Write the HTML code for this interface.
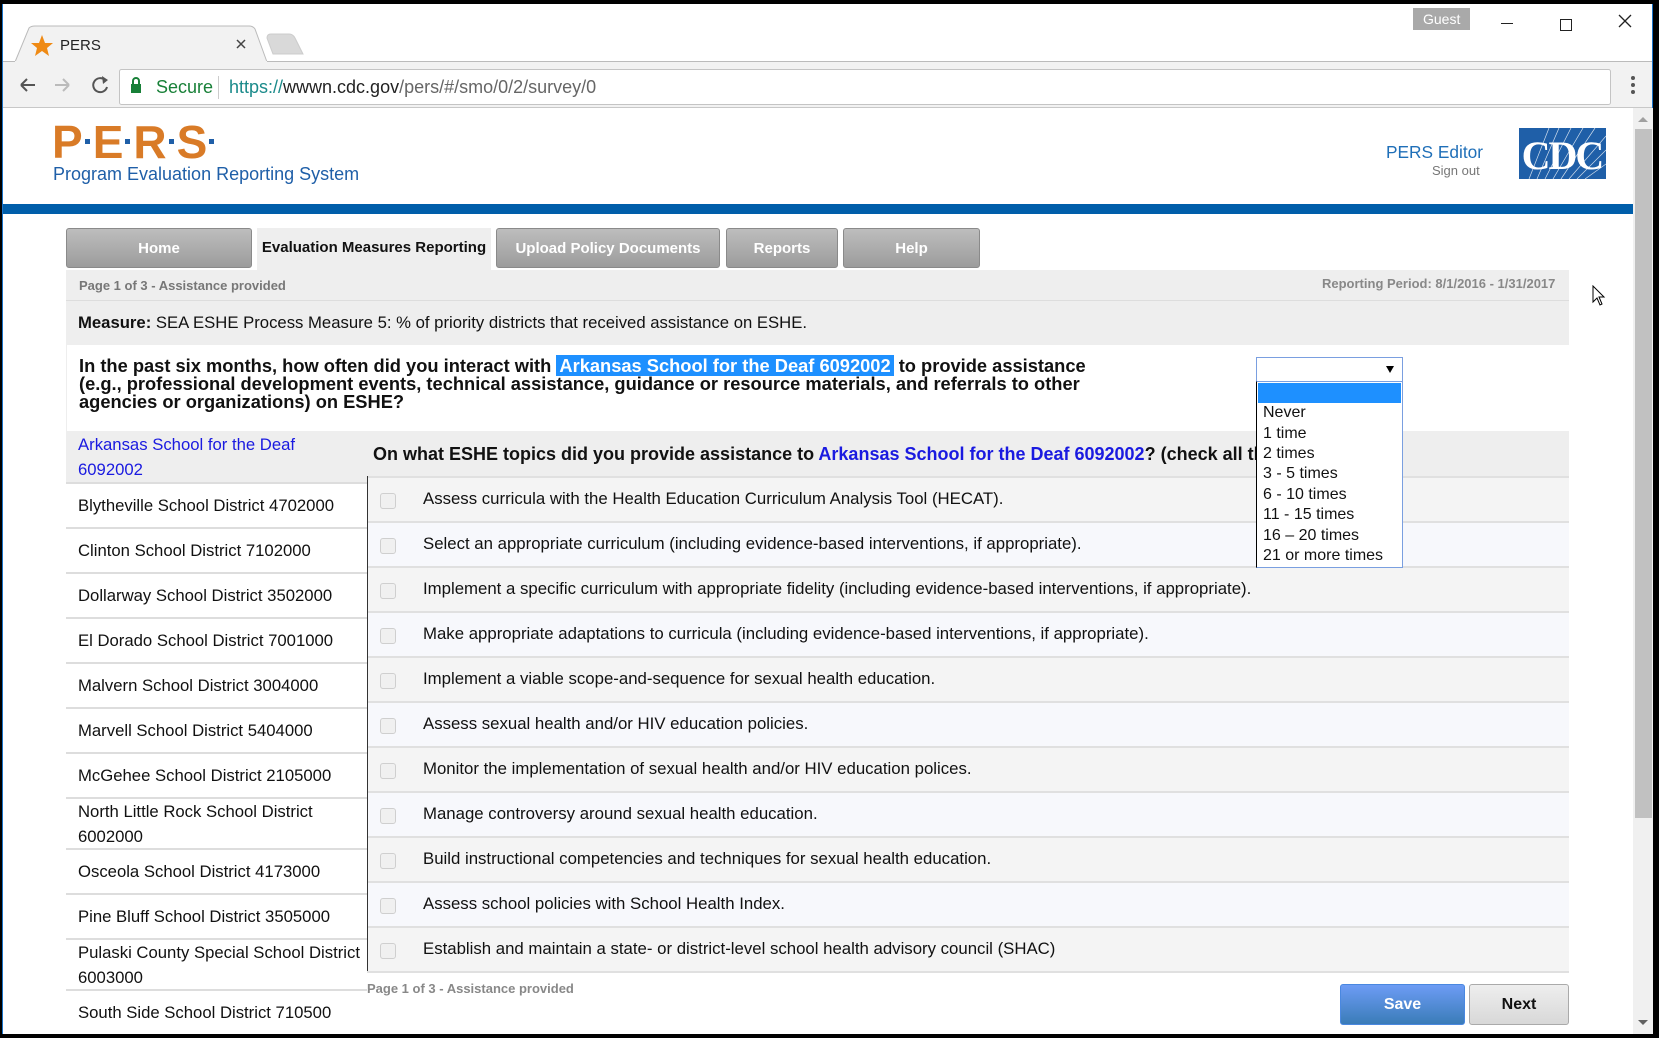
<!DOCTYPE html>
<html><head><meta charset="utf-8"><style>
*{margin:0;padding:0;box-sizing:border-box}
body{width:1659px;height:1038px;overflow:hidden;background:#000;font-family:"Liberation Sans",Arial,sans-serif;position:relative}
.a{position:absolute}
.win{left:2px;top:4px;width:1651px;height:1030px;background:#fff;border-left:1px solid #1a73c8;border-right:1px solid #1a73c8;overflow:hidden}
.tab{color:#fff;font-weight:bold;font-size:15px;text-align:center;line-height:40px;border:1px solid #8a8a8a;border-radius:3px;background:linear-gradient(#bdbdbd,#9c9c9c);top:228px;height:40px}
.lrow{left:66px;width:301px;border-top:2px solid #ddd;font-size:16.7px;color:#111;padding-left:12px;line-height:25px;display:flex;align-items:center}
.rrow{left:367px;width:1202px;height:45px;border-top:2px solid #e0e0e0;font-size:16.8px;color:#111;line-height:41px;padding-left:56px}
.rrow:before{content:"";position:absolute;left:13px;top:15px;width:14px;height:14px;border:1px solid #cfcfcf;border-radius:3px;background:#f0f0f0}
.opt{left:1263px;font-size:16px;color:#111}
.dot{display:inline-block;width:5px;height:5px;background:#1f5fa8;margin:0 3px;vertical-align:middle;position:relative;top:-4px}
</style></head><body>
<div class="a win">
 <svg class="a" style="left:0;top:0" width="1651" height="104">
  <path d="M12 58 L26 24 Q28 22 32 22 L246 22 Q250 22 252 25 L264 58" fill="#f2f2f2" stroke="#bbb"/>
  <path d="M264 34 Q264 30 268 30 L286 30 Q290 30 292 34 L300 50 L270 50 Z" fill="#d9d9d9" stroke="#ccc"/>
  <rect x="0" y="57" width="1651" height="47" fill="#f2f2f2"/>
  <line x1="0" y1="57.5" x2="12" y2="57.5" stroke="#bbb"/><line x1="264" y1="57.5" x2="1651" y2="57.5" stroke="#bbb"/>
  <line x1="0" y1="103.5" x2="1651" y2="103.5" stroke="#c8c8c8"/>
  <polygon points="39,31 42,39 50,39 44,44 46,52 39,47 32,52 34,44 28,39 36,39" fill="#ef8a14"/>
  <text x="57" y="46" font-size="15" font-family="Liberation Sans" fill="#222">PERS</text>
  <path d="M234 36 L242 44 M242 36 L234 44" stroke="#444" stroke-width="1.5"/>
  <rect x="1410" y="4" width="57" height="22" fill="#a9a9a9"/>
  <text x="1420" y="20" font-size="14" font-family="Liberation Sans" fill="#fff">Guest</text>
  <line x1="1498" y1="19.5" x2="1510" y2="19.5" stroke="#222"/>
  <rect x="1557.5" y="15.5" width="11" height="11" fill="none" stroke="#222"/>
  <path d="M1616 11 L1628 23 M1628 11 L1616 23" stroke="#222" stroke-width="1.3"/>
  <path d="M18 81 H32 M18 81 L24 75 M18 81 L24 87" stroke="#555" stroke-width="2" fill="none"/>
  <path d="M52 81 H66 M66 81 L60 75 M66 81 L60 87" stroke="#bbb" stroke-width="2" fill="none"/>
  <path d="M102 76 A7 7 0 1 0 104 83" stroke="#555" stroke-width="2" fill="none"/><path d="M99 72 L105 76 L100 80Z" fill="#555"/>
  <rect x="116.5" y="65.5" width="1491" height="35" rx="2" fill="#fff" stroke="#c4c4c4"/>
  <rect x="128" y="80" width="10" height="9" fill="#188038"/><path d="M130 80 V77 A3 3 0 0 1 136 77 V80" stroke="#188038" stroke-width="2" fill="none"/>
  <text x="153" y="89" font-size="18" font-family="Liberation Sans" fill="#188038">Secure</text>
  <line x1="215.5" y1="72" x2="215.5" y2="95" stroke="#ccc"/>
  <text x="226" y="89" font-size="18" font-family="Liberation Sans" fill="#1a8a8a">https://<tspan fill="#222">wwwn.cdc.gov</tspan><tspan fill="#666">/pers/#/smo/0/2/survey/0</tspan></text>
  <circle cx="1630" cy="74" r="2" fill="#555"/><circle cx="1630" cy="81" r="2" fill="#555"/><circle cx="1630" cy="88" r="2" fill="#555"/>
 </svg>
</div>
<div class="a" style="left:52px;top:119px;font-size:46px;line-height:46px;font-weight:bold;color:#d97b27;letter-spacing:-1px">P<span class="dot"></span>E<span class="dot"></span>R<span class="dot"></span>S<span class="dot"></span></div>
<div class="a" style="left:53px;top:164px;font-size:18px;color:#1f5fa8">Program Evaluation Reporting System</div>
<div class="a" style="left:1386px;top:142px;font-size:17.3px;color:#1f6fb8">PERS Editor</div>
<div class="a" style="left:1432px;top:163px;font-size:13px;color:#777">Sign out</div>
<svg class="a" style="left:1519px;top:128px" width="87" height="51">
 <rect width="87" height="51" fill="#1f5fa8"/>
 <g stroke="#fff" stroke-width="0.7" opacity="0.8"><path d="M10 51 L30 0 M18 51 L40 0 M26 51 L52 0 M34 51 L64 0 M42 51 L76 0 M50 51 L87 8 M58 51 L87 22 M66 51 L87 36"/></g>
 <text x="43" y="41" text-anchor="middle" font-family="Liberation Serif" font-weight="bold" font-size="40" fill="#fff" letter-spacing="-2">CDC</text>
</svg>
<div class="a" style="left:3px;top:204px;width:1630px;height:10px;background:#005eaa"></div>
<div class="a" style="left:1633px;top:108px;width:20px;height:926px;background:#f0f0f0"></div>
<div class="a" style="left:1635px;top:129px;width:17px;height:689px;background:#c1c1c1"></div>
<div class="a" style="left:1638px;top:117px;width:0;height:0;border-left:5px solid transparent;border-right:5px solid transparent;border-bottom:5px solid #a0a0a0"></div>
<div class="a" style="left:1638px;top:1020px;width:0;height:0;border-left:5px solid transparent;border-right:5px solid transparent;border-top:5px solid #606060"></div>
<div class="a tab" style="left:66px;width:186px">Home</div>
<div class="a" style="left:257px;top:228px;width:234px;height:42px;background:#eee;font-weight:bold;font-size:15px;line-height:40px;text-align:center;color:#111">Evaluation Measures Reporting</div>
<div class="a tab" style="left:496px;width:224px">Upload Policy Documents</div>
<div class="a tab" style="left:726px;width:112px">Reports</div>
<div class="a tab" style="left:843px;width:137px">Help</div>
<div class="a" style="left:66px;top:270px;width:1503px;height:162px;background:#eee"></div>
<div class="a" style="left:79px;top:278px;font-size:13px;font-weight:bold;color:#777">Page 1 of 3 - Assistance provided</div>
<div class="a" style="left:1322px;top:276px;font-size:13px;font-weight:bold;color:#888">Reporting Period: 8/1/2016 - 1/31/2017</div>
<div class="a" style="left:66px;top:300px;width:1503px;border-top:1px solid #ddd"></div>
<div class="a" style="left:78px;top:313px;font-size:16.7px;color:#111"><b>Measure:</b> SEA ESHE Process Measure 5: % of priority districts that received assistance on ESHE.</div>
<div class="a" style="left:67px;top:345px;width:1502px;height:86px;background:#fff"></div>
<div class="a" style="left:79px;top:357px;width:1010px;font-size:18.3px;font-weight:bold;color:#111;line-height:18px">In the past six months, how often did you interact with <span style="background:#1e90ff;color:#fff;padding:0 3px">Arkansas School for the Deaf 6092002</span> to provide assistance (e.g., professional development events, technical assistance, guidance or resource materials, and referrals to other agencies or organizations) on ESHE?</div>
<div class="a" style="left:66px;top:432px;width:301px;height:50px;background:#eee;color:#1a1ae0;font-size:16.7px;padding-left:12px;line-height:25px">Arkansas School for the Deaf<br>6092002</div>
<div class="a" style="left:367px;top:432px;width:1202px;height:44px;background:#eee;font-size:18px;font-weight:bold;color:#111;line-height:44px;padding-left:6px;white-space:nowrap;overflow:hidden">On what ESHE topics did you provide assistance to <span style="color:#1a1ae0">Arkansas School for the Deaf 6092002</span>? (check all that apply)</div>
<div class="a lrow" style="top:482px;height:45px">Blytheville School District 4702000</div>
<div class="a lrow" style="top:527px;height:45px">Clinton School District 7102000</div>
<div class="a lrow" style="top:572px;height:45px">Dollarway School District 3502000</div>
<div class="a lrow" style="top:617px;height:45px">El Dorado School District 7001000</div>
<div class="a lrow" style="top:662px;height:45px">Malvern School District 3004000</div>
<div class="a lrow" style="top:707px;height:45px">Marvell School District 5404000</div>
<div class="a lrow" style="top:752px;height:45px">McGehee School District 2105000</div>
<div class="a lrow" style="top:797px;height:51px">North Little Rock School District 6002000</div>
<div class="a lrow" style="top:848px;height:45px">Osceola School District 4173000</div>
<div class="a lrow" style="top:893px;height:45px">Pine Bluff School District 3505000</div>
<div class="a lrow" style="top:938px;height:51px">Pulaski County Special School District 6003000</div>
<div class="a lrow" style="top:989px;height:45px">South Side School District 710500</div>
<div class="a rrow" style="top:476px;background:#f4f4f4">Assess curricula with the Health Education Curriculum Analysis Tool (HECAT).</div>
<div class="a rrow" style="top:521px;background:#f7f8fc">Select an appropriate curriculum (including evidence-based interventions, if appropriate).</div>
<div class="a rrow" style="top:566px;background:#f4f4f4">Implement a specific curriculum with appropriate fidelity (including evidence-based interventions, if appropriate).</div>
<div class="a rrow" style="top:611px;background:#f7f8fc">Make appropriate adaptations to curricula (including evidence-based interventions, if appropriate).</div>
<div class="a rrow" style="top:656px;background:#f4f4f4">Implement a viable scope-and-sequence for sexual health education.</div>
<div class="a rrow" style="top:701px;background:#f7f8fc">Assess sexual health and/or HIV education policies.</div>
<div class="a rrow" style="top:746px;background:#f4f4f4">Monitor the implementation of sexual health and/or HIV education polices.</div>
<div class="a rrow" style="top:791px;background:#f7f8fc">Manage controversy around sexual health education.</div>
<div class="a rrow" style="top:836px;background:#f4f4f4">Build instructional competencies and techniques for sexual health education.</div>
<div class="a rrow" style="top:881px;background:#f7f8fc">Assess school policies with School Health Index.</div>
<div class="a rrow" style="top:926px;background:#f4f4f4;border-bottom:2px solid #e0e0e0;height:47px">Establish and maintain a state- or district-level school health advisory council (SHAC)</div>
<div class="a" style="left:367px;top:476px;width:1px;height:495px;background:#333"></div>
<div class="a" style="left:367px;top:981px;font-size:13px;font-weight:bold;color:#888">Page 1 of 3 - Assistance provided</div>
<div class="a" style="left:1340px;top:984px;width:125px;height:41px;border-radius:3px;border:1px solid #4a88e0;background:linear-gradient(#6d9cf5,#3a7cb8);color:#fff;font-weight:bold;font-size:16px;text-align:center;line-height:39px">Save</div>
<div class="a" style="left:1469px;top:984px;width:100px;height:41px;border-radius:3px;border:1px solid #aaa;background:linear-gradient(#eee,#d8d8d8);color:#111;font-weight:bold;font-size:16px;text-align:center;line-height:39px">Next</div>
<div class="a" style="left:1256px;top:357px;width:147px;height:25px;background:#fff;border:1px solid #7a9fe0;border-bottom:1px solid #000"></div>
<div class="a" style="left:1386px;top:366px;width:0;height:0;border-left:4px solid transparent;border-right:4px solid transparent;border-top:7px solid #000"></div>
<div class="a" style="left:1256px;top:381px;width:147px;height:187px;background:#fff;border:1px solid #7a9fe0;border-left:1px solid #000"></div>
<div class="a" style="left:1258px;top:383px;width:143px;height:20px;background:#1e90ff"></div>
<div class="a opt" style="top:404px">Never</div>
<div class="a opt" style="top:425px">1 time</div>
<div class="a opt" style="top:445px">2 times</div>
<div class="a opt" style="top:465px">3 - 5 times</div>
<div class="a opt" style="top:486px">6 - 10 times</div>
<div class="a opt" style="top:506px">11 - 15 times</div>
<div class="a opt" style="top:527px">16 – 20 times</div>
<div class="a opt" style="top:547px">21 or more times</div>
<svg class="a" style="left:1592px;top:285px" width="14" height="22"><path d="M1 1 V17 L5 13 L8 20 L10 19 L7 12 L12 12 Z" fill="#fff" stroke="#000"/></svg>
</body></html>
